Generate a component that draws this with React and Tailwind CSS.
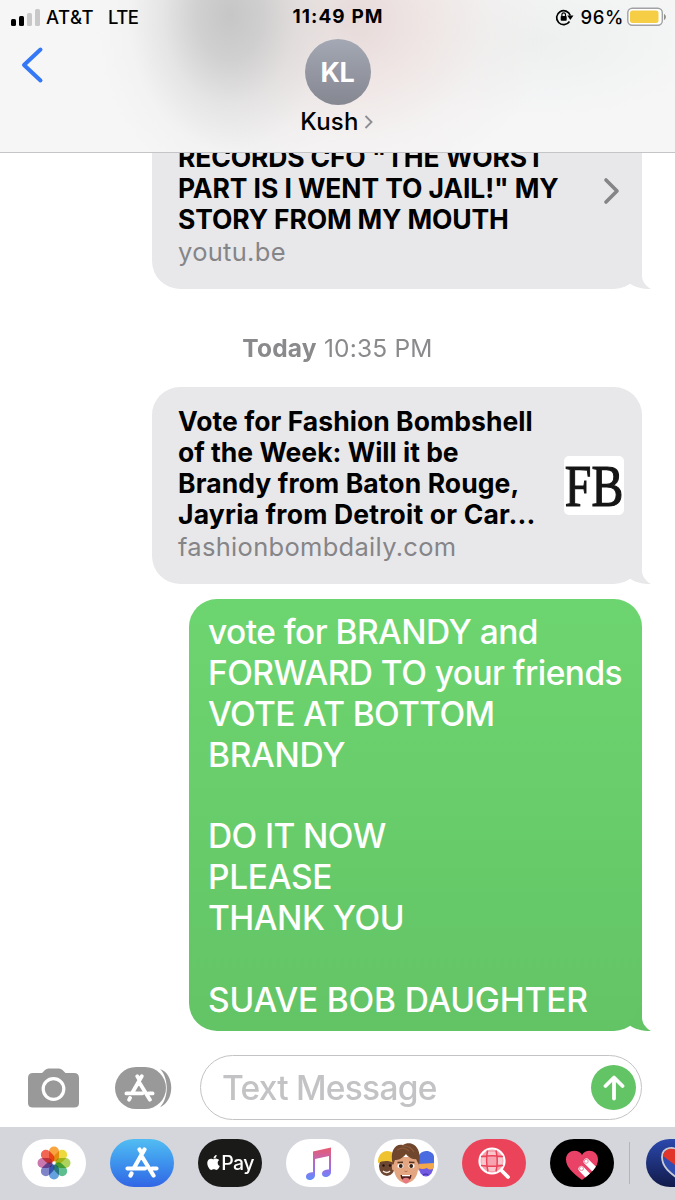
import { FaApple } from 'react-icons/fa'

const petals = ['#f7941d', '#e9d21c', '#9fcb3f', '#43b37a', '#4a90d9', '#6a6fc0', '#c05fa0', '#ee4b35']

const BubbleTail = ({ color }) => (
  <svg className="absolute bottom-0 -right-[9px] w-[21px] h-[28px]" viewBox="0 0 21 28">
    <path d="M12 0V14C12 20 15 24.5 21 28C12 28 4 26 0 22.5Z" fill={color} />
  </svg>
)

const LinkBubble = ({ lines, domain, className, children }) => (
  <div className={`relative ml-[152px] w-[490px] shrink-0 rounded-[28px] bg-[#e8e8ea] pl-[26px] pt-[19px] pb-[22px] ${className}`}>
    <div className="text-[26.5px] leading-[31px] font-bold text-black whitespace-nowrap">
      {lines.map(([text, tracking]) => (
        <p key={text} className={tracking}>{text}</p>
      ))}
    </div>
    <p className="mt-px text-[25.5px] leading-[31px] text-[#858588] tracking-[0.3px]">{domain}</p>
    {children}
    <BubbleTail color="#e8e8ea" />
  </div>
)

const StoreGlyph = ({ className }) => (
  <svg className={className} viewBox="0 0 34 31" fill="none" stroke="#fff" strokeWidth="4.2" strokeLinecap="round">
    <path d="M14.5 2.5L17 6.5M19.5 2.5L9.5 20M17.5 10.5L28.5 28.5M2.5 21.5H20M27 21.5H31.5M6.5 26.5L5.5 28.5" />
  </svg>
)

const StatusBar = () => (
  <div className="flex h-[34px] items-center px-[11px] text-[18.5px] leading-[22px] font-medium text-black">
    <div className="flex w-[180px] items-center">
      <div className="mr-[6px] flex h-[17px] items-end gap-[3px]">
        <i className="h-[7px] w-[5px] rounded-[1.5px] bg-black" />
        <i className="h-[10px] w-[5px] rounded-[1.5px] bg-black" />
        <i className="h-[13px] w-[5px] rounded-[1.5px] bg-[#c8c8c9]" />
        <i className="h-[17px] w-[5px] rounded-[1.5px] bg-[#c8c8c9]" />
      </div>
      <span className="tracking-[0.5px]">AT&amp;T</span>
      <span className="ml-[14px] tracking-[-0.6px]">LTE</span>
    </div>
    <div className="flex-1 pl-[45px] text-center text-[19px] font-bold whitespace-nowrap tracking-[1.1px]">11:49 PM</div>
    <div className="flex w-[224px] shrink-0 items-center justify-end">
      <svg className="mr-[7px] h-[18px] w-[19px]" viewBox="0 0 19 18">
        <path d="M14.5 13.5A7 7 0 1 1 15.3 7.5" fill="none" stroke="#000" strokeWidth="1.7" />
        <path d="M12.3 7.6H18.5L15.3 12Z" fill="#000" />
        <rect x="5.7" y="8" width="6" height="4.8" rx=".8" fill="#000" />
        <path d="M6.9 8V6.6a1.8 1.8 0 0 1 3.6 0V8" fill="none" stroke="#000" strokeWidth="1.2" />
      </svg>
      <span className="tracking-[0.6px]">96%</span>
      <svg className="ml-[3px] h-[20px] w-[40px] -mr-[3px]" viewBox="0 0 40 20">
        <rect x=".8" y="1.2" width="34.5" height="17" rx="4.5" fill="#fff" stroke="#a1a1a6" strokeWidth="1.4" />
        <rect x="3" y="3.5" width="28.5" height="12.5" rx="2.5" fill="#f6ce46" />
        <path d="M37 7C39.5 8 39.5 12 37 13Z" fill="#8f9086" />
      </svg>
    </div>
  </div>
)

const Header = () => (
  <header className="relative z-10 h-[153px] shrink-0 border-b border-[#c5c5c7] bg-[#f6f6f7] bg-[radial-gradient(ellipse_135px_180px_at_230px_15px,#c6c6c6_0%,#cbcbcbd9_25%,#d9d9d98c_50%,#e8e8e840_75%,transparent_100%),radial-gradient(ellipse_210px_170px_at_345px_20px,#e6d9d8_0%,#ecdfddbb_35%,#f0e8e755_70%,transparent_100%),radial-gradient(ellipse_180px_80px_at_540px_40px,#edf0ef_0%,transparent_100%)]">
    <StatusBar />
    <svg className="absolute left-[20px] top-[46px] h-[38px] w-[24px]" viewBox="0 0 24 38">
      <path d="M20.5 3.5L4 19L20.5 34.5" fill="none" stroke="#3478f6" strokeWidth="4" strokeLinecap="round" strokeLinejoin="round" />
    </svg>
    <div className="flex flex-col items-center pt-[5px]">
      <div className="flex size-[66px] items-center justify-center rounded-full bg-linear-to-b from-[#a4a8b4] to-[#858791] pt-[2px] text-[27px] font-bold text-white tracking-[-0.3px]">
        KL
      </div>
      <div className="mt-[2px] flex h-[30px] items-center text-[24px] font-medium text-black">
        <span className="tracking-[0.3px]">Kush</span>
        <svg className="ml-[5px] mr-[2px] h-[14px] w-[9px]" viewBox="0 0 9 14">
          <path d="M1.5 1L7.5 7L1.5 13" fill="none" stroke="#8e8e93" strokeWidth="1.9" />
        </svg>
      </div>
    </div>
  </header>
)

const Compose = () => (
  <div className="flex h-[96px] shrink-0 items-center bg-white pl-[28px] pt-[24px] pb-[7px]">
    <svg className="h-[40px] w-[51px]" viewBox="0 0 51 40">
      <path d="M5 5H14L17 2Q18.5 .5 20.5 .5H31Q33 .5 34.5 2L37.5 5H46Q51 5 51 10V35Q51 39.5 46 39.5H5Q0 39.5 0 35V10Q0 5 5 5Z" fill="#999" />
      <circle cx="25.5" cy="21" r="10.3" fill="none" stroke="#fff" strokeWidth="3.2" />
    </svg>
    <div className="relative ml-[36px] flex h-[42px] w-[58px] items-center">
      <svg className="absolute inset-0 h-[42px] w-[58px]" viewBox="0 0 58 42">
        <rect width="51" height="42" rx="21" fill="#999" />
        <path d="M45 2C60 7 60 34 45 40C54 31 54 11 45 2Z" fill="#999" />
      </svg>
      <StoreGlyph className="relative ml-[9px] h-[28px] w-[31px]" />
    </div>
    <div className="ml-[27px] flex h-[65px] w-[442px] items-center rounded-full border-[1.5px] border-[#c3c3c5] bg-white pl-[21px] pr-[5px]">
      <span className="flex-1 pt-px text-[33.5px] leading-[40px] font-medium text-[#c3c3c5] tracking-[-0.75px] whitespace-nowrap">Text Message</span>
      <div className="flex size-[45px] items-center justify-center rounded-full bg-[#63c466]">
        <svg className="h-[26px] w-[22px]" viewBox="0 0 22 26">
          <path d="M11 23.5V3M2.5 11L11 2.5L19.5 11" fill="none" stroke="#fff" strokeWidth="3.8" strokeLinecap="round" strokeLinejoin="round" />
        </svg>
      </div>
    </div>
  </div>
)

const PhotosIcon = () => (
  <svg className="size-[36px]" viewBox="-18 -18 36 36">
    {petals.map((color, i) => (
      <rect key={color} x="-5" y="-16.5" width="10" height="15" rx="5" fill={color} className="mix-blend-multiply" opacity=".85" transform={`rotate(${i * 45})`} />
    ))}
    <circle r="1.2" fill="#fff" />
  </svg>
)

const MusicIcon = () => (
  <svg className="h-[33px] w-[27px]" viewBox="0 0 27 33">
    <defs>
      <linearGradient id="note" x1="0" y1="0" x2="0" y2="1">
        <stop offset="0" stopColor="#e85a6e" />
        <stop offset=".35" stopColor="#c666ad" />
        <stop offset=".65" stopColor="#9a6ee8" />
        <stop offset="1" stopColor="#5c8ef8" />
      </linearGradient>
    </defs>
    <path d="M8 4.5L26 .5V25C26 31 17 31.5 17 27C17 23.5 20.5 22.5 24 22.5V9L10 12V28C10 34 1 34.5 1 30C1 26 5 25.5 8 25.3Z" fill="url(#note)" />
  </svg>
)

const MemojiIcon = () => (
  <svg className="h-[48px] w-[64px]" viewBox="0 0 64 48">
    <ellipse cx="13" cy="27" rx="8" ry="10" fill="#6d4632" />
    <path d="M4 24C3 9 21 8 22 21L20 24C14 21 8 22 4 24Z" fill="#efc32f" />
    <circle cx="9.5" cy="26.5" r="1.2" fill="#20130e" />
    <circle cx="16" cy="26.5" r="1.2" fill="#20130e" />
    <path d="M9 32Q13 35 16 32" stroke="#f4e7dc" strokeWidth="1.5" fill="none" />
    <ellipse cx="52" cy="27" rx="7.5" ry="10.5" fill="#7159e2" />
    <path d="M44 24C42 8 60 10 60 18V25Z" fill="#4a6ce0" />
    <path d="M44 25L60 24V29Q56 32 53 29Q48 31 45 29Z" fill="#f4a84c" />
    <path d="M49 36Q52 34 54 36" stroke="#4630a8" strokeWidth="1.2" fill="none" />
    <ellipse cx="19.5" cy="28" rx="1.6" ry="3.5" fill="#dea17b" />
    <ellipse cx="44" cy="28" rx="1.6" ry="3.5" fill="#dea17b" />
    <path d="M20 18H44V29C44 38 38 44 32 44S20 38 20 29Z" fill="#e3a680" />
    <path d="M19 26C15 11 22 4 29 6C36 1 49 6 45 26L42 20C39 21 34 18 32 15C28 20 24 21 21 21Z" fill="#70472d" />
    <path d="M23 11Q30 7 35 12M28 7Q36 6 40 13" stroke="#8a5a3a" strokeWidth="1.2" fill="none" />
    <path d="M23.5 23.5L29 23.2M35 23.2L40.5 23.5" stroke="#57341f" strokeWidth="1.4" />
    <ellipse cx="26.5" cy="27" rx="3" ry="2.2" fill="#fff" />
    <ellipse cx="37.5" cy="27" rx="3" ry="2.2" fill="#fff" />
    <circle cx="26.8" cy="27" r="1.9" fill="#352018" />
    <circle cx="37.2" cy="27" r="1.9" fill="#352018" />
    <path d="M30.5 32Q32 33.5 33.5 32" stroke="#b87554" strokeWidth="1" fill="none" />
    <path d="M26.5 36H37.5Q37 42 32 42T26.5 36Z" fill="#4d1d1c" />
    <path d="M28 36H36V37.2H28Z" fill="#fff" />
    <path d="M28.5 40Q32 37.5 35.5 40V42Q32 47.5 28.5 42Z" fill="#e77b80" />
  </svg>
)

const SearchIcon = () => (
  <svg className="h-[34px] w-[34px]" viewBox="0 0 34 34">
    <circle cx="15" cy="15" r="12.5" fill="#f6a3af" stroke="#fff" strokeWidth="2.2" />
    <path d="M10 6H19V10H10ZM4.5 12H9V19H4.5ZM11 20H19V25H11ZM20.5 12H25.5V18H20.5Z" fill="#fac6cd" />
    <path d="M4 10.5Q15 9 26 10.5M4 19.5Q15 21 26 19.5M10.5 4.5Q8.5 15 11 25.5M19 4.5Q21.5 15 19 25.5" fill="none" stroke="#eb445a" strokeWidth="1.5" />
    <path d="M24.5 24.5L31 31" stroke="#fff" strokeWidth="3.8" strokeLinecap="round" />
  </svg>
)

const TouchIcon = () => (
  <svg className="mt-[3px] h-[30px] w-[34px]" viewBox="0 0 34 30">
    <defs>
      <clipPath id="heart">
        <path d="M17 30C8 23 1 17 1 9.5C1 0 13-2 17 5C21-2 33 0 33 9.5C33 17 26 23 17 30Z" />
      </clipPath>
    </defs>
    <g clipPath="url(#heart)">
      <rect width="34" height="30" fill="#e94266" />
      <path d="M16.5 19L28 31M21.5 11.5L35 25" stroke="#fff" strokeWidth="6" strokeLinecap="round" />
      <circle cx="16.5" cy="18.5" r="2" fill="#fff" stroke="#e98a9e" />
      <circle cx="21.2" cy="11.3" r="2" fill="#fff" stroke="#e98a9e" />
    </g>
  </svg>
)

const SouthwestIcon = () => (
  <svg className="mt-[1px] ml-[14px] h-[34px] w-[40px] shrink-0" viewBox="0 0 40 34">
    <path d="M20 33C10 26 2 20 2 10C2 0 15-2 20 6C25-2 38 0 38 10C38 20 30 26 20 33Z" fill="#304cb2" stroke="#c9cbd5" strokeWidth="1.8" />
    <path d="M3 9C4 2 11 0 16 3L37 19C35 23 32 25 28 28Z" fill="#e1352c" />
    <path d="M16 2.5Q19 4 20 7C25-1 37 1 37 10Q37 15 35 18Z" fill="#f5b62b" />
  </svg>
)

const apps = [
  { name: 'photos', bg: 'bg-white', icon: <PhotosIcon /> },
  { name: 'store', bg: 'bg-linear-to-b from-[#52bdf2] to-[#3265e5]', icon: <StoreGlyph className="-mt-px h-[31px] w-[34px]" /> },
  {
    name: 'pay',
    bg: 'bg-[#1a1a18]',
    icon: (
      <div className="flex items-center text-white">
        <FaApple className="mb-[2px] h-[17px] w-[15px]" />
        <span className="text-[19.5px] leading-[24px] font-medium tracking-[-0.7px]">Pay</span>
      </div>
    )
  },
  { name: 'music', bg: 'bg-white', icon: <MusicIcon /> },
  { name: 'memoji', bg: 'bg-white', icon: <MemojiIcon /> },
  { name: 'search', bg: 'bg-[#eb445a]', icon: <SearchIcon /> },
  { name: 'touch', bg: 'bg-black', icon: <TouchIcon /> }
]

const AppStrip = () => (
  <div className="flex h-[73px] shrink-0 gap-[24px] overflow-hidden bg-[#d5d6dc] pl-[22px] pt-[12px]">
    {apps.map((app) => (
      <div key={app.name} className={`flex h-[48px] w-[64px] shrink-0 items-center justify-center overflow-hidden rounded-full ${app.bg}`}>
        {app.icon}
      </div>
    ))}
    <div className="-ml-[9px] mt-[3px] h-[42px] w-px shrink-0 bg-[#b4b5ba]" />
    <div className="-ml-[8px] flex h-[48px] w-[64px] shrink-0 items-center overflow-hidden rounded-full bg-linear-to-b from-[#2b49ad] to-[#111a4b]">
      <SouthwestIcon />
    </div>
  </div>
)

const messageLines = [
  ['vote for BRANDY and', 'tracking-[-0.55px]'],
  ['FORWARD TO your friends', 'tracking-[-0.55px]'],
  ['VOTE AT BOTTOM', 'tracking-[-0.65px]'],
  ['BRANDY', 'tracking-[-0.3px]'],
  ['', ''],
  ['DO IT NOW', 'tracking-[-0.6px]'],
  ['PLEASE', 'tracking-[-0.3px]'],
  ['THANK YOU', 'tracking-[-0.5px]'],
  ['', ''],
  ['SUAVE BOB DAUGHTER', 'tracking-[-0.2px]']
]

const App = () => {
  return (
    <div className="flex h-[1200px] w-[675px] flex-col overflow-hidden bg-white font-['Inter',sans-serif]">
      <Header />

      {/* Conversation */}
      <main className="flex h-[878px] shrink-0 flex-col">
        <LinkBubble
          className="-mt-[30px]"
          domain="youtu.be"
          lines={[
            ['RECORDS CFO "THE WORST', 'tracking-[-0.15px]'],
            ['PART IS I WENT TO JAIL!" MY', 'tracking-[-0.1px]'],
            ['STORY FROM MY MOUTH', 'tracking-[-0.15px]']
          ]}
        >
          <svg className="absolute right-[21px] top-[54px] h-[28px] w-[18px]" viewBox="0 0 18 28">
            <path d="M3 3L14 14L3 25" fill="none" stroke="#858588" strokeWidth="3.6" strokeLinecap="round" strokeLinejoin="round" />
          </svg>
        </LinkBubble>

        <p className="mt-[44px] h-[30px] shrink-0 text-center text-[24.5px] leading-[30px] text-[#8a8a8d] tracking-[0.2px] whitespace-nowrap">
          <span className="font-bold">Today</span> 10:35 PM
        </p>

        <LinkBubble
          className="mt-[24px]"
          domain="fashionbombdaily.com"
          lines={[
            ['Vote for Fashion Bombshell', 'tracking-[0.05px]'],
            ['of the Week: Will it be', 'tracking-[0px]'],
            ['Brandy from Baton Rouge,', 'tracking-[0.1px]'],
            ['Jayria from Detroit or Car...', 'tracking-[0.2px]']
          ]}
        >
          <div className="absolute right-[18px] top-[69px] flex h-[59px] w-[60px] items-center justify-center rounded-[5px] bg-white">
            <span className="scale-x-[0.81] pt-px text-[59px] leading-[59px] font-['Liberation_Serif',serif] text-[#151515] [-webkit-text-stroke:1.2px_#151515]">FB</span>
          </div>
        </LinkBubble>

        <div className="relative mt-[15px] ml-[189px] h-[432px] w-[453px] shrink-0 rounded-[28px] bg-linear-to-b from-[#6dd56f] to-[#63c466] pl-[19px] pt-[13px]">
          <div className="text-[33.5px] leading-[40.9px] font-medium text-white whitespace-nowrap">
            {messageLines.map(([text, tracking], i) => (
              <p key={i} className={`h-[40.9px] ${tracking}`}>{text}</p>
            ))}
          </div>
          <BubbleTail color="#63c466" />
        </div>
      </main>

      <Compose />
      <AppStrip />
    </div>
  )
}

export default App
